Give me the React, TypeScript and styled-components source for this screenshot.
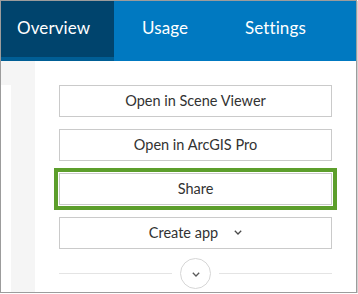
import React from "react";
import styled, { createGlobalStyle } from "styled-components";

const Global = createGlobalStyle`
  html, body { margin: 0; padding: 0; background: #ffffff; }
  body { font-family: "Lato", "Open Sans", sans-serif; }
  * { box-sizing: border-box; }
`;

const Frame = styled.div`
  width: 357px;
  height: 293px;
  border: 1px solid #9c9c9c;
  box-shadow: 1px 1px 0 #d2d2d2;
  display: flex;
  flex-direction: column;
  overflow: hidden;
  background: #ffffff;
`;

const TabBar = styled.div`
  height: 60px;
  flex: none;
  display: flex;
  background: #0079c1;
`;

const Tab = styled.div<{ $active?: boolean; $width: number; $pad: number }>`
  width: ${(p) => p.$width}px;
  padding-left: ${(p) => p.$pad}px;
  height: 100%;
  display: flex;
  align-items: center;
  padding-bottom: 3px;
  color: #ffffff;
  font-size: 17px;
  letter-spacing: 0.1px;
  background: ${(p) => (p.$active ? "#00446d" : "transparent")};
  border-bottom: 4px solid ${(p) => (p.$active ? "#005e95" : "transparent")};
`;

const Body = styled.div`
  flex: 1;
  display: flex;
  min-height: 0;
`;

const SideRail = styled.div`
  width: 34px;
  flex: none;
  background: #f5f5f5;
  padding-top: 24px;
`;

const RailPanel = styled.div`
  width: 10px;
  height: 100%;
  background: #ffffff;
`;

const Main = styled.div`
  flex: 1;
  padding: 24px 24px 0 24px;
  display: flex;
  flex-direction: column;
  gap: 12px;
`;

const Button = styled.button<{ $focused?: boolean }>`
  height: 32px;
  width: 100%;
  flex: none;
  display: flex;
  align-items: center;
  justify-content: center;
  gap: 16px;
  background: #ffffff;
  border: 1px solid #cacaca;
  color: #323232;
  font-family: "Lato", "Open Sans", sans-serif;
  font-size: 14.5px;
  padding: 0 0 1px 0;
  cursor: pointer;
  box-shadow: ${(p) =>
    p.$focused ? "0 0 0 1px #ffffff, 0 0 0 5px #5c9e2b" : "none"};
`;

const DividerRow = styled.div`
  display: flex;
  align-items: center;
  gap: 8px;
  margin-top: -3px;
`;

const Rule = styled.div`
  flex: 1;
  height: 1px;
  background: #e4e4e4;
`;

const CircleButton = styled.div`
  width: 31px;
  height: 31px;
  flex: none;
  border-radius: 50%;
  border: 1px solid #d6d6d6;
  background: #ffffff;
  display: flex;
  align-items: center;
  justify-content: center;
  padding-top: 2px;
`;

const Chevron = ({ color, w = 8 }: { color: string; w?: number }) => (
  <svg width={w} height={w / 2 + 1} viewBox="0 0 8 5" fill="none">
    <path d="M0.8 0.8 L4 4 L7.2 0.8" stroke={color} strokeWidth="1.3" />
  </svg>
);

export default function App() {
  return (
    <>
      <Global />
      <Frame>
        <TabBar>
          <Tab $active $width={113} $pad={16}>Overview</Tab>
          <Tab $width={103} $pad={28}>Usage</Tab>
          <Tab $width={120} $pad={28}>Settings</Tab>
        </TabBar>
        <Body>
          <SideRail>
            <RailPanel />
          </SideRail>
          <Main>
            <Button>Open in Scene Viewer</Button>
            <Button>Open in ArcGIS Pro</Button>
            <Button $focused>Share</Button>
            <Button>
              <span>Create app</span>
              <Chevron color="#4a4a4a" />
            </Button>
            <DividerRow>
              <Rule />
              <CircleButton>
                <Chevron color="#595959" />
              </CircleButton>
              <Rule />
            </DividerRow>
          </Main>
        </Body>
      </Frame>
    </>
  );
}
